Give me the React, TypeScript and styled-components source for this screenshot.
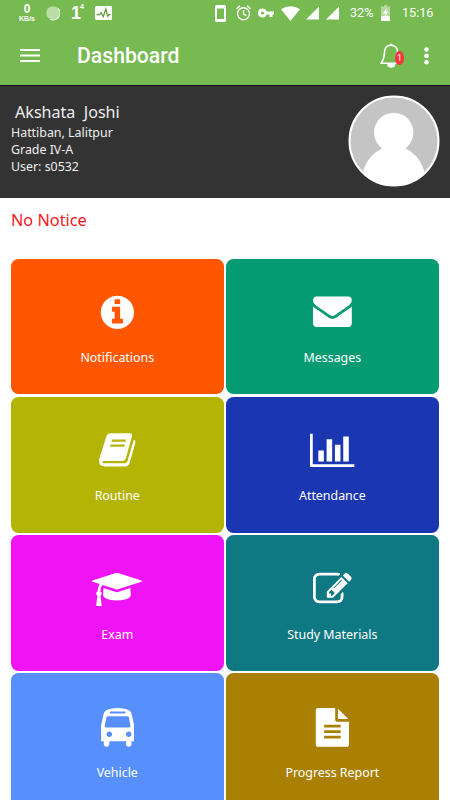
import React from "react";
import styled, { createGlobalStyle } from "styled-components";

const GlobalStyle = createGlobalStyle`
  * { box-sizing: border-box; }
  html, body { margin: 0; padding: 0; background: #fff; }
`;

const Screen = styled.main`
  width: 450px;
  height: 800px;
  overflow: hidden;
  background: #fff;
  font-family: "Noto Sans", "Open Sans", sans-serif;
`;

const Header = styled.header`
  height: 85px;
  background: #76ba51;
  color: #fff;
  font-family: Roboto, sans-serif;
`;

const StatusBar = styled.div`
  display: flex;
  align-items: center;
  height: 26px;
  padding-left: 18px;
  svg { display: block; flex: none; }
`;

const StatusItem = styled.div<{ $gap?: number; $width: number }>`
  flex: none;
  width: ${(p) => p.$width}px;
  margin-left: ${(p) => p.$gap ?? 0}px;
  white-space: nowrap;
`;

const Speed = styled(StatusItem)`
  display: flex;
  flex-direction: column;
  align-items: center;
  span { font: 700 12px/11px "Liberation Sans", sans-serif; }
  small { font: 700 7px/8px "Liberation Sans", sans-serif; }
`;

const Count = styled(StatusItem)`
  display: flex;
  align-items: flex-start;
  font: 700 18px/20px "Liberation Sans", sans-serif;
  sup { margin-left: -1px; font-size: 7px; line-height: 8px; }
`;

const StatusText = styled(StatusItem)`
  font-size: 12.6px;
  letter-spacing: 0;
  line-height: 26px;
`;

const Toolbar = styled.div`
  display: flex;
  align-items: center;
  height: 59px;
  padding: 0 20px 0 20px;
`;

const IconButton = styled.button`
  display: flex;
  padding: 0;
  border: 0;
  background: none;
  color: #fff;
`;

const Title = styled.h1`
  flex: 1;
  margin: 0 0 0 37px;
  font-size: 21.2px;
  line-height: 30px;
  font-weight: 500;
`;

const BellButton = styled(IconButton)`
  position: relative;
  margin-right: 23px;
`;

const Badge = styled.span`
  position: absolute;
  left: 15px;
  top: 8px;
  width: 9px;
  height: 14px;
  border-radius: 50%;
  background: #f9323c;
  font: 9px/14px Roboto, sans-serif;
  text-align: center;
`;

const Profile = styled.section`
  display: flex;
  justify-content: space-between;
  height: 113px;
  padding: 9.3px 10.5px 0 11px;
  border-top: 1px solid #100725;
  background: #333;
  color: #eee;
`;

const Details = styled.div`
  padding-top: 4.7px;
  font-size: 12.4px;
  line-height: 17.2px;
`;

const Name = styled.h2`
  margin: 0 0 0 4px;
  font-size: 16.1px;
  line-height: 24px;
  font-weight: 400;
  white-space: pre;
`;

const Notice = styled.p`
  height: 60.6px;
  margin: 0;
  padding: 10px 11px;
  color: #f81520;
  font-size: 16.3px;
  line-height: 24px;
`;

const TileGrid = styled.nav`
  display: grid;
  grid-template-columns: 212.5px 212.5px;
  grid-auto-rows: 135.7px;
  gap: 2.6px;
  padding-left: 11px;
`;

const Tile = styled.a<{ $color: string }>`
  display: flex;
  flex-direction: column;
  align-items: center;
  padding-top: 34.5px;
  border-radius: 7.5px;
  background: ${(p) => p.$color};
  color: #fff;
  svg { display: block; }
`;

const Label = styled.span`
  margin-top: 16.2px;
  font-size: 12.4px;
  line-height: 20px;
  white-space: nowrap;
`;

type TileData = { label: string; color: string; width: number; top?: number; path: string };

const textLine = "v-64q0-14-9-23t-23-9h-704q-14 0-23 9t-9 23v64q0 14 9 23t23 9h704q14 0 23-9t9-23z";

const tiles: TileData[] = [
  {
    label: "Notifications", color: "#ff5602", width: 1792,
    path: "M1152 1376v-160q0-14-9-23t-23-9h-96v-512q0-14-9-23t-23-9h-320q-14 0-23 9t-9 23v160q0 14 9 23t23 9h96v320h-96q-14 0-23 9t-9 23v160q0 14 9 23t23 9h448q14 0 23-9t9-23zm-128-896v-160q0-14-9-23t-23-9h-192q-14 0-23 9t-9 23v160q0 14 9 23t23 9h192q14 0 23-9t9-23zm640 416q0 209-103 385.5t-279.5 279.5-385.5 103-385.5-103-279.5-279.5-103-385.5 103-385.5 279.5-279.5 385.5-103 385.5 103 279.5 279.5 103 385.5z",
  },
  {
    label: "Messages", color: "#069b72", width: 1792, top: 90,
    path: "M1792 710v794q0 66-47 113t-113 47h-1472q-66 0-113-47t-47-113v-794q44 49 101 87 362 246 497 345 57 42 92.5 65.5t94.5 48 110 24.5h2q51 0 110-24.5t94.5-48 92.5-65.5q170-123 498-345 57-39 100-87zm0-294q0 79-49 151t-122 123q-376 261-468 325-10 7-42.5 31t-54 38.5-52 32.5-57.5 27-50 9h-2q-23 0-50-9t-57.5-27-52-32.5-54-38.5-42.5-31q-91-64-262-182.5t-205-142.5q-62-42-117-115.5t-55-136.5q0-78 41.5-130t118.5-52h1472q65 0 112.5 47t47.5 113z",
  },
  {
    label: "Routine", color: "#b4b405", width: 1792,
    path: "M570 105H1470Q1610 105 1570 245L1290 1250Q1250 1380 1120 1380H280Q200 1380 200 1440Q210 1490 290 1490H1190Q1330 1490 1370 1360L1650 400Q1760 440 1720 570L1460 1480Q1410 1640 1250 1640H300Q60 1640 50 1400Q50 1300 90 1180L390 245Q440 105 570 105ZM650 388L620 500H1270L1300 388ZM580 620L550 730H1210L1240 620Z",
  },
  {
    label: "Attendance", color: "#1b36b1", width: 2048,
    path: "M640 896v512h-256v-512h256zm384-512v1024h-256v-1024h256zm1024 1152v128h-2048v-1536h128v1408h1920zm-640-896v768h-256v-768h256zm384-384v1152h-256v-1152h256z",
  },
  {
    label: "Exam", color: "#ef13f5", width: 2304,
    path: "M1774 836l18 316q4 69-82 128t-235 93.5-323 34.5-323-34.5-235-93.5-82-128l18-316 574 181q22 7 48 7t48-7zm530-324q0 23-22 31l-1120 352q-4 1-10 1t-10-1l-652-206q-43 34-71 111.5t-34 178.5q63 36 63 109 0 69-58 107l58 433q2 14-8 25-9 11-24 11h-192q-15 0-24-11-10-11-8-25l58-433q-58-38-58-107 0-73 65-111 11-207 98-330l-333-104q-22-8-22-31t22-31l1120-352q4-1 10-1t10 1l1120 352q22 8 22 31z",
  },
  {
    label: "Study Materials", color: "#0f7983", width: 1792,
    path: "M888 1184l116-116-152-152-116 116v56h96v96h56zm440-720q-16-16-33 1l-350 350q-17 17-1 33t33-1l350-350q17-17 1-33zm80 594v190q0 119-84.5 203.5t-203.5 84.5h-832q-119 0-203.5-84.5t-84.5-203.5v-832q0-119 84.5-203.5t203.5-84.5h832q63 0 117 25 15 7 18 23 3 17-9 29l-49 49q-14 14-32 8-23-6-45-6h-832q-66 0-113 47t-47 113v832q0 66 47 113t113 47h832q66 0 113-47t47-113v-126q0-13 9-22l64-64q15-15 35-7t20 29zm-96-738l288 288-672 672h-288v-288zm444 132l-92 92-288-288 92-92q28-28 68-28t68 28l152 152q28 28 28 68t-28 68z",
  },
  {
    label: "Vehicle", color: "#5790fc", width: 1536,
    path: "M512 1216q0-53-37.5-90.5t-90.5-37.5-90.5 37.5-37.5 90.5 37.5 90.5 90.5 37.5 90.5-37.5 37.5-90.5zm896 0q0-53-37.5-90.5t-90.5-37.5-90.5 37.5-37.5 90.5 37.5 90.5 90.5 37.5 90.5-37.5 37.5-90.5zm-46-396l-72-384q-5-23-22.5-37.5t-40.5-14.5h-918q-23 0-40.5 14.5t-22.5 37.5l-72 384q-5 30 14 53t49 23h1062q30 0 49-23t14-53zm-226-612q0-20-14-34t-34-14h-640q-20 0-34 14t-14 34 14 34 34 14h640q20 0 34-14t14-34zm400 725v603h-128v128q0 53-37.5 90.5t-90.5 37.5-90.5-37.5-37.5-90.5v-128h-768v128q0 53-37.5 90.5t-90.5 37.5-90.5-37.5-37.5-90.5v-128h-128v-603q0-112 25-223l103-454q9-78 97.5-137t230-89 312.5-30 312.5 30 230 89 97.5 137l105 454q23 102 23 223z",
  },
  {
    label: "Progress Report", color: "#aa8003", width: 1792,
    path: `M1596 476q14 14 28 36h-472v-472q22 14 36 28zm-476 164h544v1056q0 40-28 68t-68 28h-1344q-40 0-68-28t-28-68v-1600q0-40 28-68t68-28h800v544q0 40 28 68t68 28zm160 736${textLine}m0-256${textLine}m0-256${textLine}`,
  },
];

const Signal = () => (
  <svg width="13" height="14" viewBox="0 0 13 14"><path d="M13 0.5V13.5H0Z" fill="#fff" /></svg>
);

export default function App() {
  return (
    <>
      <GlobalStyle />
      <Screen>
        <Header>
          <StatusBar>
            <Speed $width={18}><span>0</span><small>KB/s</small></Speed>
            <StatusItem $width={14} $gap={10}>
              <svg width="14" height="15" viewBox="0 0 14 15">
                <circle cx="7" cy="7" r="6.8" fill="#b9dda4" />
                <path d="M12 2.300a6.800 6.800 0 0 1-8 10.800" fill="none" stroke="#f1faeb" strokeWidth="1.1" />
              </svg>
            </StatusItem>
            <Count $width={15} $gap={11}>1<sup>4</sup></Count>
            <StatusItem $width={17} $gap={9}>
              <svg width="17" height="14" viewBox="0 0 17 14">
                <rect width="17" height="14" rx="1.5" fill="#fff" />
                <path d="M1.5 8.7h3l1.6-2 2.1 4 2.6-7.5 2 7 1-1.5h2" fill="none" stroke="#609d41" strokeWidth="1.3" />
              </svg>
            </StatusItem>
            <StatusItem $width={11} $gap={103}>
              <svg width="11" height="17" viewBox="0 0 11 17">
                <path fill="#fff" fillRule="evenodd" d="M1.5 0h8Q11 0 11 1.5v14Q11 17 9.500 17h-8Q0 17 0 15.500v-14Q0 0 1.500 0ZM2 3.500v10.500h7V3.500Z" />
              </svg>
            </StatusItem>
            <StatusItem $width={15} $gap={10}>
              <svg width="15" height="16" viewBox="0 0 15 16" fill="none" stroke="#fff" strokeWidth="1.4">
                <circle cx="7.500" cy="8.700" r="6" />
                <path d="M.500 3.800 4 .8M14.500 3.800 11 .8M7.500 5v4l2.800 1.700" />
              </svg>
            </StatusItem>
            <StatusItem $width={16} $gap={7}>
              <svg width="16" height="10" viewBox="0 0 16 10">
                <path fill="#fff" fillRule="evenodd" d="M4.500 0.500a4.500 4.500 0 1 0 4.200 6h2.800V9h3V6.500H16v-3H8.700A4.500 4.500 0 0 0 4.500.5ZM4.500 3.400a1.600 1.600 0 1 1 0 3.200 1.600 1.600 0 0 1 0-3.200Z" />
              </svg>
            </StatusItem>
            <StatusItem $width={19} $gap={7}>
              <svg width="19" height="15" viewBox="0 0 19 15"><path d="M0 3.300Q9.500-3 19 3.300L9.500 15Z" fill="#fff" /></svg>
            </StatusItem>
            <StatusItem $width={13} $gap={6}><Signal /></StatusItem>
            <StatusItem $width={13} $gap={7}><Signal /></StatusItem>
            <StatusText $width={24} $gap={11}>32%</StatusText>
            <StatusItem $width={9} $gap={7}>
              <svg width="9" height="16" viewBox="0 0 9 16">
                <path d="M3 0h3v1.500h3V11H0V1.500h3Z" fill="#b5d9a0" />
                <path d="M0 11h9v5H0Z" fill="#fff" />
                <path d="M5.500 3 2 8.500h2.200V12l3-5.500H5.200Z" fill="#fff" />
              </svg>
            </StatusItem>
            <StatusText $width={32} $gap={12}>15:16</StatusText>
          </StatusBar>
          <Toolbar>
            <IconButton aria-label="Menu">
              <svg width="20" height="14" viewBox="0 0 20 14" stroke="#fff" strokeWidth="2">
                <path d="M0 1h20M0 6.500h20M0 12h20" />
              </svg>
            </IconButton>
            <Title>Dashboard</Title>
            <BellButton aria-label="Alerts">
              <svg width="21" height="25" viewBox="0 0 21 25" fill="none" stroke="#fff" strokeWidth="1.600">
                <path d="M11 2.300c-4.500 0-6.500 3-6.500 7 0 5.500-1.500 8.200-3.300 10.900h19.600c-1.800-2.700-3.300-5.400-3.300-10.900 0-4-2-7-6.500-7Z" />
                <path d="M9.800 1.500h2.400M8 21q0 3 3.200 3t3.200-3Z" fill="#fff" />
              </svg>
              <Badge>1</Badge>
            </BellButton>
            <IconButton aria-label="More">
              <svg width="6" height="18" viewBox="0 0 6 18" fill="#fff">
                <circle cx="2.500" cy="2.500" r="2.300" /><circle cx="2.500" cy="8.900" r="2.300" /><circle cx="2.500" cy="15.300" r="2.300" />
              </svg>
            </IconButton>
          </Toolbar>
        </Header>
        <Profile>
          <Details>
            <Name>Akshata  Joshi</Name>
            <div>Hattiban, Lalitpur</div>
            <div>Grade IV-A</div>
            <div>User: s0532</div>
          </Details>
          <svg width="92" height="92" viewBox="0 0 92 92">
            <defs><clipPath id="face"><circle cx="46" cy="46" r="45" /></clipPath></defs>
            <circle cx="46" cy="46" r="44.500" fill="#c4c4c4" />
            <g clipPath="url(#face)" fill="#fff">
              <circle cx="45.700" cy="37.500" r="19.700" />
              <ellipse cx="45.700" cy="87" rx="32" ry="36" />
            </g>
            <circle cx="46" cy="46" r="44.500" fill="none" stroke="#fff" strokeWidth="2" />
          </svg>
        </Profile>
        <Notice>No Notice</Notice>
        <TileGrid>
          {tiles.map((tile) => (
            <Tile key={tile.label} $color={tile.color}>
              <svg width={(tile.width * 38.8) / 1792} height="38.8" viewBox={`0 ${tile.top ?? 0} ${tile.width} 1792`} fill="#fff">
                <path d={tile.path} />
              </svg>
              <Label>{tile.label}</Label>
            </Tile>
          ))}
        </TileGrid>
      </Screen>
    </>
  );
}
